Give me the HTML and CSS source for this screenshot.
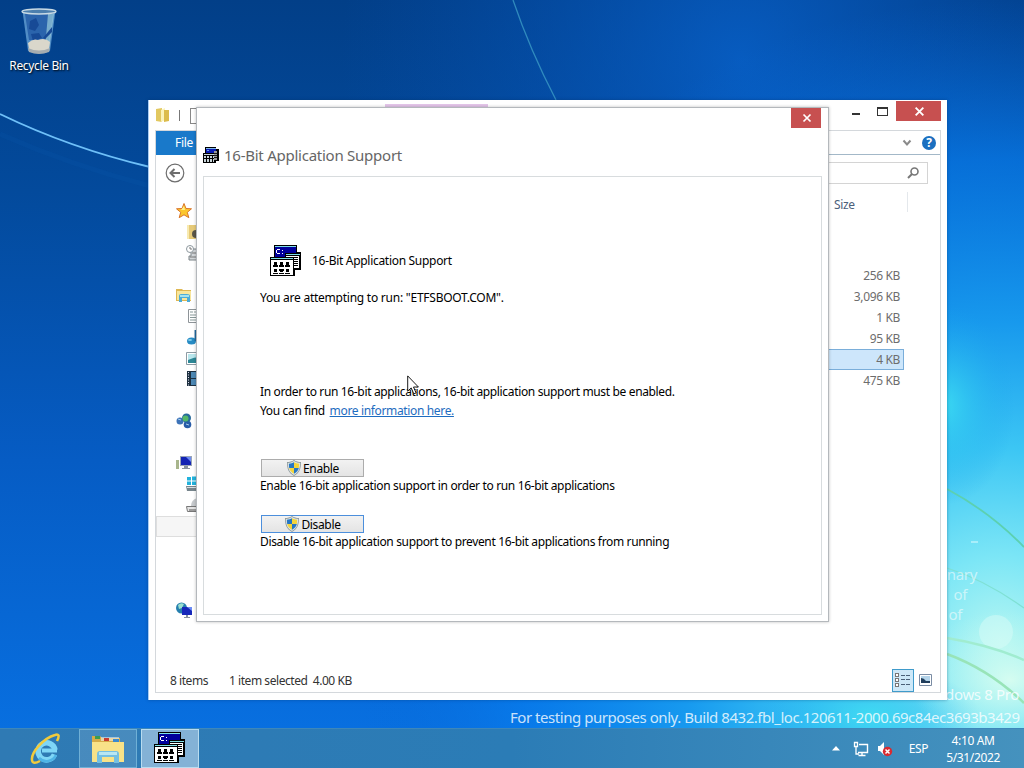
FILE: index.html
```html
<!DOCTYPE html>
<html lang="en">
<head>
    <meta charset="UTF-8">
    <meta name="viewport" content="width=device-width, initial-scale=1.0">
    <title>16-Bit Application Support</title>
    <link rel="stylesheet" href="styles.css">
</head>
<body>
    <!-- shared icons -->
    <svg class="defs" width="0" height="0">
        <symbol id="dos" viewBox="0 0 32 32">
            <path fill="#000" d="M4 0h23v7h4v18h-6v6H0V12h4z"/>
            <path fill="#7fe0e8" d="M5 1h21v1H5z"/>
            <path fill="#00009c" d="M5 2h21v10H5z"/>
            <path fill="#fff" d="M7 4h3v1H7zM6 5h1v3H6zM7 8h3v1H7zM12 5h1v1h-1zM12 8h1v1h-1z"/>
            <path fill="#000" d="M15 8h16v17H15z"/>
            <path fill="#7fe0e8" d="M16 9h14v1H16z"/>
            <path fill="#fff" d="M16 11h13v12H16z"/>
            <path fill="#000" d="M18 12h10v1H18zM18 14h10v1H18zM18 16h10v1H18zM18 18h10v1H18zM18 20h10v1H18zM0 12h24v19H0z"/>
            <path fill="#7fe0e8" d="M1 13h22v1H1z"/>
            <path fill="#fff" d="M1 15h22v15H1z"/>
            <path fill="#000" d="M4 17h3v3H4zM10 17h3v3h-3zM16 17h3v3h-3zM3 20h5v2H3zM9 20h5v2H9zM15 20h5v2h-5zM4 24h3v3H4zM9 24h5v2H9zM10 26h3v1h-3zM16 24h3v3h-3zM3 28h5v1H3zM9 28h5v1H9zM15 28h5v1h-5z"/>
        </symbol>
        <symbol id="dos-small" viewBox="0 0 16 16">
            <path fill="#000" d="M2 0h11v2h3v12h-3v2H0V6h2z"/>
            <path fill="#7fb8e8" d="M3 1h10v1H3z"/>
            <path fill="#0a1cb4" d="M3 2h10v4H3z"/>
            <path fill="#6c9cf0" d="M4 3h2v1H4z"/>
            <path fill="#999" d="M11 4h3v9h-3z"/>
            <path fill="#1a1a1a" d="M11 6h3v1h-3zM11 8h3v1h-3zM11 10h3v1h-3z"/>
            <path fill="#c8d4d8" d="M1 7h10v1H1zM1 9h2v2H1zM4 9h2v2H4zM7 9h2v2H7zM10 9h1v2h-1zM1 12h2v3H1zM4 12h2v3H4zM7 12h2v3H7zM10 12h1v3h-1z"/>
        </symbol>
        <symbol id="shield" viewBox="0 0 16 16">
            <path fill="#8f9a9c" d="M8 0C6 1.500 3.500 2 1 2c0 7 1.500 11 7 14 5.500-3 7-7 7-14-2.500 0-5-.5-7-2z"/>
            <path fill="#dde5e6" d="M8 1C6 2.300 4 2.800 1.800 2.900 2 9 3.500 12.500 8 15c4.500-2.500 6-6 6.200-12.100C12 2.800 10 2.300 8 1z"/>
            <path fill="#2676c4" d="M8 2.300v5.700H3.200C2.900 6.600 2.900 5 2.900 3.800 5 3.600 6.600 3.100 8 2.300z"/>
            <path fill="#f5d53a" d="M8 2.300v5.700h4.800c.3-1.400.3-3 .3-4.200C11 3.600 9.400 3.100 8 2.300z"/>
            <path fill="#f5d53a" d="M3.200 8H8v5.800C5.200 12.200 3.800 10.500 3.200 8z"/>
            <path fill="#2676c4" d="M12.800 8H8v5.800c2.800-1.600 4.200-3.300 4.800-5.800z"/>
        </symbol>
        <symbol id="close" viewBox="0 0 10 10">
            <path d="M1.500 1.500l7 7M8.500 1.500l-7 7" stroke="#fff" stroke-width="1.700"/>
        </symbol>
    </svg>

    <div class="desktop">
        <svg class="wallpaper" viewBox="0 0 1024 768">
            <defs>
                <linearGradient id="sky" x1="0" y1="0" x2="0" y2="1">
                    <stop offset="0" stop-color="#023f88"/>
                    <stop offset=".25" stop-color="#034a9c"/>
                    <stop offset=".6" stop-color="#065cc4"/>
                    <stop offset="1" stop-color="#0872e4"/>
                </linearGradient>
                <radialGradient id="glow" gradientUnits="userSpaceOnUse" cx="1000" cy="640" r="640">
                    <stop offset="0" stop-color="#b4f6f2"/>
                    <stop offset=".13" stop-color="#7ce6f6"/>
                    <stop offset=".3" stop-color="#3cc6f4"/>
                    <stop offset=".5" stop-color="#189cf0" stop-opacity=".95"/>
                    <stop offset=".75" stop-color="#087eee" stop-opacity=".7"/>
                    <stop offset="1" stop-color="#0668d8" stop-opacity="0"/>
                </radialGradient>
                <radialGradient id="top" gradientUnits="userSpaceOnUse" cx="740" cy="60" r="400">
                    <stop offset="0" stop-color="#0862cc" stop-opacity=".8"/>
                    <stop offset="1" stop-color="#0550b4" stop-opacity="0"/>
                </radialGradient>
                <radialGradient id="cyan">
                    <stop offset="0" stop-color="#3cdcf2" stop-opacity=".9"/>
                    <stop offset="1" stop-color="#1aa4ee" stop-opacity="0"/>
                </radialGradient>
                <radialGradient id="pale">
                    <stop offset="0" stop-color="#e0fff0" stop-opacity=".85"/>
                    <stop offset="1" stop-color="#c0faf0" stop-opacity="0"/>
                </radialGradient>
            </defs>
            <rect width="1024" height="768" fill="url(#sky)"/>
            <rect width="1024" height="768" fill="url(#top)"/>
            <rect width="1024" height="768" fill="url(#glow)"/>
            <ellipse cx="945" cy="405" rx="70" ry="100" fill="url(#cyan)"/>
            <ellipse cx="870" cy="715" rx="110" ry="50" fill="url(#cyan)"/>
            <ellipse cx="1010" cy="680" rx="100" ry="70" fill="url(#pale)"/>
            <circle cx="996" cy="632" r="17" fill="#d8fbf8" opacity=".5"/>
            <g fill="none">
                <path d="M0 114Q70 148 150 167" stroke="#6fc0f8" stroke-width="1.800"/>
                <path d="M0 134Q70 165 150 186" stroke="#0c5cb4" stroke-width="5" opacity=".15"/>
                <path d="M513 0Q530 50 556 100" stroke="#3fa0c8" stroke-width="1.300" opacity=".75"/>
                <path d="M947 489Q990 512 1024 547" stroke="#5cd0b0" stroke-width="1.800"/>
                <path d="M947 568Q985 580 1024 608" stroke="#7fe0d4" stroke-width="1.300"/>
                <path d="M947 638Q990 645 1024 660" stroke="#a0ecd0" stroke-width="2.500"/>
                <path d="M947 654Q990 670 1024 703" stroke="#98e4b8" stroke-width="2.500"/>
                <path d="M971 542h7" stroke="#a8eefa" stroke-width="2"/>
            </g>
        </svg>

        <div class="shortcut">
            <svg width="40" height="48" viewBox="0 0 40 48">
                <path d="M3.500 4L9 44q12 5 22 0l5.500-40z" fill="#5f9bd0" opacity=".85"/>
                <path d="M6 7l4 26h20l4-26z" fill="#2b64ac"/>
                <path d="M29 7l-3 34 4 1 5-35z" fill="#9accdc" opacity=".7"/>
                <path d="M11 14l6-3 3 7-4 6-6-2zM12 27l8-1 3 5-9 3zM33 20l-9 11 2 1 7-7z" fill="#174a96"/>
                <path d="M9 36q5-5 10-3 7-3 12 2l-1 7q-10 5-20 0z" fill="#dad7cb"/>
                <path d="M9 41q11 5 22 0l-1 4q-10 4-20 0z" fill="#a5acb0"/>
                <ellipse cx="20" cy="4.500" rx="17" ry="2.500" fill="#4c7fae" stroke="#c9dae4" stroke-width="1.300"/>
            </svg>
            <span>Recycle Bin</span>
        </div>

        <div class="notice">
            <span>nary</span>
            <span class="second">of</span>
            <span class="third">of</span>
        </div>
        <div class="edition">Windows 8 Pro</div>
        <div class="build">For testing purposes only. Build 8432.fbl_loc.120611-2000.69c84ec3693b3429</div>

        <div class="explorer">
            <div class="titlebar">
                <svg class="folder" width="16" height="16" viewBox="0 0 16 16">
                    <path d="M1 2l6-1v14l-6-1z" fill="#e2c860"/>
                    <path d="M6 3l4-2v12l-4 2z" fill="#fbf3b8"/>
                    <path d="M9 3h5v11l-5 1z" fill="#dcbc4c"/>
                </svg>
                <span class="separator"></span>
                <span class="quick"></span>
                <span class="tools-tab"></span>
                <svg class="min-max" width="36" height="20" viewBox="0 0 36 20" shape-rendering="crispEdges">
                    <path d="M0 12h8v2H0z" fill="#333"/>
                    <path d="M25.500 6h10v8h-10zM25 7h11" fill="none" stroke="#333"/>
                </svg>
                <button class="close wide"><svg width="11" height="11"><use href="#close"/></svg></button>
            </div>
            <div class="client">
                <div class="ribbon">
                    <span class="file-tab">File</span>
                    <svg width="10" height="8" viewBox="0 0 10 8"><path d="M1.500 1.500L5 5.500l3.500-4" fill="none" stroke="#8a8a8a" stroke-width="2"/></svg>
                    <span class="help">?</span>
                </div>
                <div class="address">
                    <svg width="20" height="20" viewBox="0 0 20 20" fill="none" stroke="#6e6e6e">
                        <circle cx="10" cy="10" r="8.800" stroke-width="1.200"/>
                        <path d="M15 10H6M9.500 6L5.500 10l4 4" stroke-width="2"/>
                    </svg>
                    <div class="search">
                        <svg width="12" height="12" viewBox="0 0 12 12" fill="none" stroke="#777">
                            <circle cx="7.500" cy="4.500" r="3.500" stroke-width="1.600"/>
                            <path d="M5 7l-4 4" stroke-width="2"/>
                        </svg>
                    </div>
                </div>
                <div class="panes">
                    <ul class="tree">
                        <li><svg viewBox="0 0 16 16"><path d="M8 .5l2 5 5.500.3-4.200 3.500 1.500 5.400L8 11.800l-4.800 2.900 1.500-5.400L.5 5.800 6 5.500z" fill="#fcc62c" stroke="#d9752a"/><path d="M8 3l1 4H5z" fill="#fff08a"/></svg></li>
                        <li class="sub"><svg viewBox="0 0 16 16"><path d="M1 1h14v14H1z" fill="#e6ca78"/><path d="M3 1v14H1V1z" fill="#f8eab0"/><circle cx="10" cy="10" r="4" fill="#5a5648"/></svg></li>
                        <li class="sub"><svg viewBox="0 0 16 16"><path d="M5 4h10v11H3v-4h2z" fill="#d3d7da" stroke="#7d8488"/><circle cx="4" cy="4" r="3.500" fill="#fff" stroke="#8d979d"/><path d="M4 2v2h2M6 8h8M4 12h10" stroke="#777" fill="none"/></svg></li>
                        <li class="blank"></li>
                        <li><svg viewBox="0 0 16 16"><path d="M0 2h6l1 1h8v11H0z" fill="#dfb852"/><path d="M1 4h14v9H1z" fill="#f8e69c"/><path d="M3 15V9q0-2 2-2h6q3 0 3 2v6h-3v-4H6v4z" fill="#4bacd8"/><path d="M4 8h9v2H4z" fill="#a4e2ee"/></svg></li>
                        <li class="sub"><svg viewBox="0 0 16 16"><path d="M2.500 1.500h12v13h-12z" fill="#fff" stroke="#8e9498"/><path d="M4 4h3M8 4h5M4 7h7M4 9.500h7M4 12h7" stroke="#899"/></svg></li>
                        <li class="sub"><svg viewBox="0 0 16 16"><ellipse cx="5.500" cy="12" rx="4.500" ry="3.500" fill="#278bc4"/><path d="M9.300 12V1" stroke="#226aa0" stroke-width="1.500"/><ellipse cx="4" cy="11" rx="2" ry="1" fill="#7fcdea"/></svg></li>
                        <li class="sub"><svg viewBox="0 0 16 16"><path d="M.5 2.500h15v12H.5z" fill="#fff" stroke="#8c9ba4"/><path d="M2 4h12v9H2z" fill="#2d8796"/><path d="M2 4h12v3q-6 0-12 3z" fill="#b9e6ec"/></svg></li>
                        <li class="sub"><svg viewBox="0 0 16 16"><path d="M1 0h14v15H1z" fill="#1d3040"/><path d="M5 1h8v6H5zM5 8h8v6H5z" fill="#4d88b4"/><path d="M2.500 1v14" stroke="#dde" stroke-dasharray="1 1.500"/></svg></li>
                        <li class="blank"></li>
                        <li><svg viewBox="0 0 16 16"><circle cx="4" cy="8" r="3.500" fill="#3c73b8"/><circle cx="11.500" cy="11.500" r="3.800" fill="#285ca8"/><circle cx="10.500" cy="5" r="4.500" fill="#276a9c"/><circle cx="9.500" cy="5.500" r="3" fill="#54b868"/><path d="M2 6l3 1M10 11l3 1" stroke="#a8d0ee"/></svg></li>
                        <li class="blank"></li>
                        <li><svg viewBox="0 0 16 16"><path d="M4 1h12v10H4z" fill="#9aa5b6"/><path d="M5 2h10v8H5z" fill="#1424b4"/><path d="M10 2h5v5z" fill="#6c8cf4"/><path d="M8 11h4v2H8zM6 13h8v1H6z" fill="#8a94a0"/><path d="M0 5h3v9H0z" fill="#a8b58c"/></svg></li>
                        <li class="sub"><svg viewBox="0 0 16 16"><path d="M1 1h4v3.500H1zM6 .5h5v4H6zM1 5.500h4V9H1zM6 5.500h5V9H6z" fill="#22b2dc"/><path d="M0 10h16v5H1z" fill="#77858c"/><path d="M1 11h14v1H1z" fill="#d4dde0"/></svg></li>
                        <li class="sub"><svg viewBox="0 0 16 16"><path d="M5 9q0-6 6-8v8z" fill="#c6c9cc"/><path d="M.5 9.500h15v5h-14z" fill="#e4e4e4" stroke="#777"/><path d="M3 13h9" stroke="#555"/></svg></li>
                        <li class="hover"></li>
                        <li class="blank"></li>
                        <li class="blank"></li>
                        <li class="blank"></li>
                        <li><svg viewBox="0 0 16 16"><circle cx="5.500" cy="6" r="5.500" fill="#257fae"/><path d="M2 3q3-3 6-1L6 6 3 7z" fill="#9be0d0"/><path d="M6 5h10v8H6z" fill="#1728ba"/><path d="M11 5h5v4z" fill="#6c8cf4"/><path d="M10 13h2v2h2v1H8v-1h2z" fill="#8790a0"/></svg></li>
                    </ul>
                    <div class="files">
                        <div class="column">Size</div>
                        <ul>
                            <li>256 KB</li>
                            <li>3,096 KB</li>
                            <li>1 KB</li>
                            <li>95 KB</li>
                            <li class="selected">4 KB</li>
                            <li>475 KB</li>
                        </ul>
                    </div>
                </div>
                <div class="status">
                    <span class="count">8 items</span>
                    <span>1 item selected&nbsp; 4.00 KB</span>
                    <span class="view on">
                        <svg width="16" height="14" viewBox="0 0 16 14" fill="none" stroke="#4a6078" shape-rendering="crispEdges">
                            <path d="M.5.500h3v3h-3zM.5 5h3v3h-3zM.5 10h3v3h-3z" fill="#fff" stroke="#777"/>
                            <path d="M6 2.500h4M11 2.500h4M6 6.500h4M11 6.500h4M6 11.500h4M11 11.500h4"/>
                        </svg>
                    </span>
                    <span class="view">
                        <svg width="13" height="12" viewBox="0 0 13 12"><path d="M.5.500h12v11H.5z" fill="#fff" stroke="#7a8ca4"/><path d="M2 2h9v7H2z" fill="#b4d4ea"/><path d="M2 4q3 0 5 3h4v2H2z" fill="#213e5c"/></svg>
                    </span>
                </div>
            </div>
        </div>

        <div class="dialog">
            <button class="close"><svg width="10" height="10"><use href="#close"/></svg></button>
            <h1><svg width="16" height="16"><use href="#dos-small"/></svg>16-Bit Application Support</h1>
            <div class="page">
                <div class="heading">
                    <svg width="32" height="32"><use href="#dos"/></svg>
                    <span>16-Bit Application Support</span>
                </div>
                <p class="program">You are attempting to run: "ETFSBOOT.COM".</p>
                <p class="info">In order to run 16-bit applications, 16-bit application support must be enabled.<br>You can find <a href="#">more information here.</a></p>
                <div class="choice">
                    <button><svg width="16" height="16"><use href="#shield"/></svg>Enable</button>
                    <p>Enable 16-bit application support in order to run 16-bit applications</p>
                </div>
                <div class="choice">
                    <button class="default"><svg width="16" height="16"><use href="#shield"/></svg>Disable</button>
                    <p>Disable 16-bit application support to prevent 16-bit applications from running</p>
                </div>
            </div>
        </div>

        <div class="taskbar">
            <div class="task">
                <svg width="34" height="34" viewBox="0 0 34 34">
                    <path d="M28 18.500H13" fill="none" stroke="#7fd6f6" stroke-width="4"/>
                    <path d="M26 18A8.500 8.500 0 1 0 25.500 22.500" fill="none" stroke="#7fd6f6" stroke-width="5.500"/>
                    <path d="M27 23A10.500 10.500 0 0 1 10 26" fill="none" stroke="#4fb4e6" stroke-width="2.500"/>
                    <path d="M28 9Q32 1 26 3C15 6 2 20 3 28q.5 5 8 1" fill="none" stroke="#f2cb3c" stroke-width="2.500"/>
                </svg>
            </div>
            <div class="task open">
                <svg width="34" height="30" viewBox="0 0 34 30">
                    <path d="M1 2h8l2 2h18v4h4v20H1z" fill="#d6ac48"/>
                    <path d="M10 3h18v4H10z" fill="#fff" opacity=".5"/>
                    <path d="M4 2h5v3H4z" fill="#3a9c50"/>
                    <path d="M13 4h5v3h-5z" fill="#c83c30"/>
                    <path d="M22 5h6v3h-6z" fill="#3a8ad0"/>
                    <path d="M1 8h32v20H1z" fill="#f8e288"/>
                    <path d="M6 29V20q0-3 3-3h16q3 0 3 3v9h-5v-6H11v6z" fill="#74bfe2"/>
                    <path d="M8 18h18v3H8z" fill="#b9e6f2"/>
                </svg>
            </div>
            <div class="task active"><svg width="32" height="32"><use href="#dos"/></svg></div>
            <div class="tray">
                <svg width="8" height="5" viewBox="0 0 8 5"><path d="M4 0l4 4.500H0z" fill="#fff"/></svg>
                <svg width="16" height="16" viewBox="0 0 16 16" fill="none" stroke="#fff">
                    <path d="M6 3.500h8.500v8H5M9 12v2.500M5.500 14.500h7" stroke-width="1.400"/>
                    <path d="M1.500 1.500h3v4h-3zM3 6v7h3" stroke-width="1.300"/>
                </svg>
                <svg width="16" height="16" viewBox="0 0 16 16">
                    <path d="M1 5h2l4-4v13l-4-4H1z" fill="#fff"/>
                    <circle cx="10.500" cy="10.500" r="4.700" fill="#d92a30"/>
                    <path d="M8.500 8.500l4 4M12.500 8.500l-4 4" stroke="#fff" stroke-width="1.500"/>
                </svg>
                <span class="lang">ESP</span>
                <div class="clock">4:10 AM<br>5/31/2022</div>
            </div>
        </div>

        <svg class="cursor" width="13" height="20" viewBox="0 0 13 20">
            <path d="M.7.900v15.300l3.500-3.300 2.600 6 2.300-1-2.600-5.900h4.900z" fill="#fff" stroke="#000" stroke-width=".9"/>
        </svg>
    </div>
</body>
</html>
```

FILE: styles.css
```css
* {
    box-sizing: border-box;
}
body {
    margin: 0;
    font-family: "Noto Sans", "Open Sans", sans-serif;
    font-size: 12px;
    letter-spacing: -0.35px;
    color: #000;
}
ul {
    list-style: none;
    margin: 0;
    padding: 0;
}
p, h1 {
    margin: 0;
    font-weight: normal;
}
svg {
    display: block;
    flex: none;
}
button {
    font: inherit;
    letter-spacing: inherit;
    padding: 0;
}
.defs {
    position: absolute;
}
.desktop {
    position: relative;
    width: 1024px;
    height: 768px;
    overflow: hidden;
    background-color: #0560c8;
}
.wallpaper {
    position: absolute;
    left: 0;
    top: 0;
    width: 1024px;
    height: 768px;
}
.shortcut {
    position: absolute;
    left: 0;
    top: 7px;
    width: 78px;
    display: flex;
    flex-direction: column;
    align-items: center;
    gap: 2px;
    color: #fff;
    line-height: 18px;
    text-shadow: 1px 1px 2px #000;
}

/* watermark */
.notice, .edition, .build {
    position: absolute;
    color: rgba(255, 255, 255, 0.8);
    font-size: 15px;
    line-height: 20px;
    white-space: nowrap;
}
.notice {
    left: 920px;
    width: 57px;
    top: 564px;
    display: flex;
    flex-direction: column;
    align-items: flex-end;
    opacity: 0.7;
}
.second {
    margin-right: 10px;
}
.third {
    margin-right: 15px;
}
.edition {
    right: 5px;
    top: 684px;
}
.build {
    left: 510px;
    top: 707px;
    letter-spacing: -0.46px;
}

/* explorer window */
.explorer {
    position: absolute;
    left: 148px;
    top: 100px;
    width: 799px;
    height: 600px;
    padding: 0 6px 7px 6px;
    background-color: #fff;
    border-left: 1px solid #a8ccf4;
    box-shadow: 0 0 3px rgba(0, 40, 90, 0.4);
    display: flex;
    flex-direction: column;
    color: #444;
}
.titlebar {
    display: flex;
    height: 30px;
}
.folder {
    margin: 7px 0 0 0;
}
.separator {
    width: 1px;
    height: 11px;
    margin: 10px 0 0 8px;
    background-color: #777;
}
.quick {
    width: 14px;
    height: 16px;
    margin: 8px 0 0 10px;
    border: 1px solid #888;
}
.tools-tab {
    width: 103px;
    height: 10px;
    margin: 4px 0 0 181px;
    background-color: #e4c6ea;
}
.min-max {
    margin: 1px 8px 0 auto;
}
.close {
    display: flex;
    align-items: center;
    justify-content: center;
    width: 30px;
    height: 20px;
    padding-left: 2px;
    border: none;
    background-color: #c75050;
}
.close.wide {
    width: 45px;
    margin-top: 1px;
}
.client {
    flex: 1;
    display: flex;
    flex-direction: column;
    border: 1px solid #d4d8dc;
}
.ribbon {
    height: 24px;
    display: flex;
    align-items: center;
    border-bottom: 1px solid #a3b8c8;
}
.file-tab {
    width: 56px;
    height: 24px;
    line-height: 24px;
    text-align: center;
    color: #fff;
    background-color: #1979ca;
    margin-right: auto;
}
.help {
    width: 14px;
    height: 14px;
    margin: 0 4px 0 10px;
    border-radius: 50%;
    background-color: #1a6fc0;
    color: #fff;
    font-weight: bold;
    line-height: 14px;
    text-align: center;
}
.address {
    height: 46px;
    padding: 8px 12px 0 9px;
    display: flex;
    justify-content: space-between;
}
.search {
    width: 200px;
    height: 22px;
    margin-top: -1px;
    padding-right: 8px;
    border: 1px solid #d4d4d4;
    display: flex;
    align-items: center;
    justify-content: flex-end;
}
.panes {
    flex: 1;
    display: flex;
    justify-content: space-between;
}
.tree {
    width: 140px;
}
.tree li {
    height: 21px;
    padding: 2px 0 0 20px;
}
.tree .sub {
    padding-left: 30px;
}
.tree svg {
    width: 16px;
    height: 16px;
}
.tree .hover {
    background-color: #f6f6f6;
    border: 1px solid #dedede;
}
.files {
    width: 145px;
    padding-right: 36px;
    color: #6d6d6d;
}
.column {
    height: 20px;
    margin: -9px -4px 53px 0;
    padding-left: 39px;
    border-right: 1px solid #e4e8ec;
    line-height: 26px;
    color: #4c607a;
}
.files li {
    height: 21px;
    line-height: 21px;
    padding-right: 4px;
    text-align: right;
}
.files .selected {
    background-color: #cde6fb;
    outline: 1px solid #7aaeda;
    outline-offset: -1px;
}
.status {
    height: 24px;
    display: flex;
    align-items: center;
    padding: 0 4px 0 14px;
    color: #333;
    letter-spacing: -0.45px;
}
.count {
    margin-right: 21px;
}
.view {
    width: 22px;
    height: 23px;
    display: flex;
    align-items: center;
    justify-content: center;
}
.view.on {
    margin-left: auto;
    background-color: #cde8f8;
    border: 1px solid #3f9bcb;
}

/* dialog */
.dialog {
    position: absolute;
    left: 196px;
    top: 107px;
    width: 633px;
    height: 515px;
    padding: 1px 6px 6px 6px;
    background-color: #fff;
    border: 1px solid #b4b8bc;
    box-shadow: 0 0 3px rgba(0, 0, 0, 0.25);
    display: flex;
    flex-direction: column;
}
.dialog > .close {
    align-self: flex-end;
    margin-right: 1px;
    margin-top: -1px;
}
.dialog h1 {
    height: 48px;
    display: flex;
    align-items: center;
    gap: 5px;
    padding: 5px 0 0 0;
    font-size: 15px;
    letter-spacing: -0.25px;
    color: #666;
}
.page {
    flex: 1;
    padding: 68px 0 0 56px;
    border: 1px solid #d8dcde;
}
.heading {
    display: flex;
    align-items: center;
    gap: 10px;
    padding-left: 10px;
    height: 32px;
    letter-spacing: -0.3px;
}
.heading span {
    padding-bottom: 2px;
}
.program {
    margin-top: 12px;
    line-height: 18px;
    letter-spacing: -0.24px;
}
.info {
    margin-top: 75px;
    line-height: 19px;
}
.info a {
    margin-left: 2px;
    color: #1e6cc0;
}
.choice {
    margin-top: 39px;
}
.choice + .choice {
    margin-top: 20px;
}
.choice button {
    display: flex;
    align-items: center;
    justify-content: center;
    gap: 1px;
    width: 103px;
    height: 18px;
    margin-left: 1px;
    color: #000;
    border: 1px solid #acacac;
    background: linear-gradient(#f2f2f2, #e4e4e4);
}
.choice .default {
    border-color: #4c8fdc;
}
.choice p {
    line-height: 18px;
}

/* taskbar */
.taskbar {
    position: absolute;
    left: 0;
    bottom: 0;
    width: 1024px;
    height: 40px;
    padding-left: 17px;
    display: flex;
    background: linear-gradient(90deg, #2f7ab4, #2b7cb6 50%, #4592be);
    border-top: 1px solid #3d87ba;
}
.task {
    width: 58px;
    height: 39px;
    margin-right: 4px;
    display: flex;
    align-items: center;
    justify-content: center;
}
.task.open {
    background-color: rgba(255, 255, 255, 0.12);
    border: 1px solid #6fb0d6;
}
.task.active {
    background-color: #84b2d6;
    border: 1px solid #b8dcf0;
}
.task.active svg {
    margin-bottom: 2px;
}
.tray {
    margin-left: auto;
    padding-right: 24px;
    display: flex;
    align-items: center;
    color: #fff;
}
.tray svg + svg {
    margin-left: 8px;
}
.tray svg:first-child + svg {
    margin-left: 13px;
}
.lang {
    margin-left: 16px;
}
.clock {
    margin-left: 18px;
    line-height: 17px;
    text-align: center;
}
.cursor {
    position: absolute;
    left: 407px;
    top: 375px;
}
```
